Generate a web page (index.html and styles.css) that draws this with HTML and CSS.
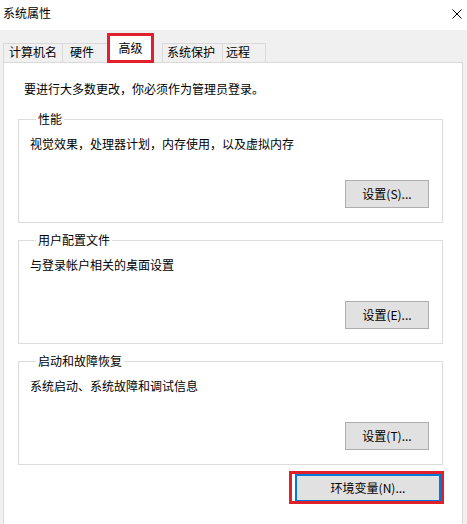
FILE: index.html
```html
<!DOCTYPE html>
<html lang="zh-CN">
<head>
<meta charset="utf-8">
<title>系统属性</title>
<link rel="stylesheet" href="styles.css">
</head>
<body>
<div class="titlebar">
  <span class="title">系统属性</span>
  <svg class="close" width="10" height="10" viewBox="0 0 10 10" aria-label="关闭"><path d="M0.5 0.5 L9.5 9.5 M9.5 0.5 L0.5 9.5" stroke="#000" stroke-width="1" fill="none"/></svg>
</div>
<div class="dialog">
  <div class="tabs">
    <div class="tab tab-name">计算机名</div>
    <div class="tab tab-hw">硬件</div>
    <div class="tab tab-active">高级</div>
    <div class="tab tab-protect">系统保护</div>
    <div class="tab tab-remote">远程</div>
  </div>
  <div class="panel">
    <p class="intro">要进行大多数更改<span class="punct">，</span>你必须作为管理员登录。</p>
    <fieldset class="group">
      <legend>性能</legend>
      <p class="desc">视觉效果<span class="punct">，</span>处理器计划<span class="punct">，</span>内存使用<span class="punct">，</span>以及虚拟内存</p>
      <div class="actions"><button class="btn">设置(S)...</button></div>
    </fieldset>
    <fieldset class="group">
      <legend>用户配置文件</legend>
      <p class="desc">与登录帐户相关的桌面设置</p>
      <div class="actions"><button class="btn">设置(E)...</button></div>
    </fieldset>
    <fieldset class="group">
      <legend>启动和故障恢复</legend>
      <p class="desc">系统启动、系统故障和调试信息</p>
      <div class="actions"><button class="btn">设置(T)...</button></div>
    </fieldset>
    <div class="footer"><button class="btn btn-default highlight">环境变量(N)...</button></div>
  </div>
</div>
</body>
</html>
```
FILE: styles.css
```css
* { box-sizing: border-box; }
html, body {
  margin: 0;
  width: 467px;
  height: 524px;
  overflow: hidden;
}
body {
  background: #f0f0f0;
  color: #000;
  font: 12px/16px "Noto Sans CJK SC", "Noto Sans", sans-serif;
}
.titlebar {
  height: 30px;
  background: #fff;
  display: flex;
  justify-content: space-between;
  align-items: flex-start;
  padding: 5px 5px 0 3px;
}
.close { margin-top: 4px; display: block; }

.dialog { padding: 0 4px 0 3px; }
.tabs {
  height: 32px;
  display: flex;
  align-items: flex-end;
}
.tab {
  height: 19px;
  border: 1px solid #d9d9d9;
  border-bottom: none;
  background: #f0f0f0;
  padding-top: 0;
  white-space: nowrap;
}
.tab-name { width: 60px; padding-left: 5px; }
.tab-hw { width: 46px; padding-left: 7px; margin-left: -1px; }
.tab-active {
  width: 47px;
  height: 30px;
  margin-left: -1px;
  margin-bottom: -1px;
  position: relative;
  z-index: 1;
  background: #fff;
  border: none;
  text-align: center;
  padding-top: 7px;
  outline: 3px solid #e0202a;
  outline-offset: -3px;
}
.tab-protect { width: 61px; padding-left: 4px; margin-left: 8px; }
.tab-remote { width: 44px; padding-left: 3px; margin-left: -1px; }

.panel {
  background: #fff;
  border: 1px solid #d9d9d9;
  padding: 0 19px 60px 14px;
}
.punct { font-family: "Noto Sans CJK TC", "Noto Sans CJK SC", sans-serif; }
.intro {
  margin: 18px 0 14px;
  padding-left: 6px;
}
.group {
  margin: 0 0 9px;
  padding: 0 13px 14px 11px;
  border: 1px solid #dcdcdc;
  min-inline-size: 0;
}
.group legend {
  margin-left: 6px;
  padding: 0 2px;
  line-height: 16px;
}
.desc { margin: 9px 0 0; }
.actions {
  display: flex;
  justify-content: flex-end;
  margin-top: 28px;
}
.btn {
  font: inherit;
  color: #000;
  height: 28px;
  width: 84px;
  background: #e1e1e1;
  border: 1px solid #adadad;
  padding: 0;
  margin: 0;
}
.footer {
  display: flex;
  justify-content: flex-end;
  padding-right: 2px;
  margin-top: 9px;
}
.btn-default {
  width: 146px;
  border: 2px solid #0078d7;
}
.highlight { position: relative; }
.highlight::after {
  content: "";
  position: absolute;
  left: -8px;
  right: -5px;
  top: -5px;
  bottom: -4px;
  border: 3px solid #e0202a;
}
```
